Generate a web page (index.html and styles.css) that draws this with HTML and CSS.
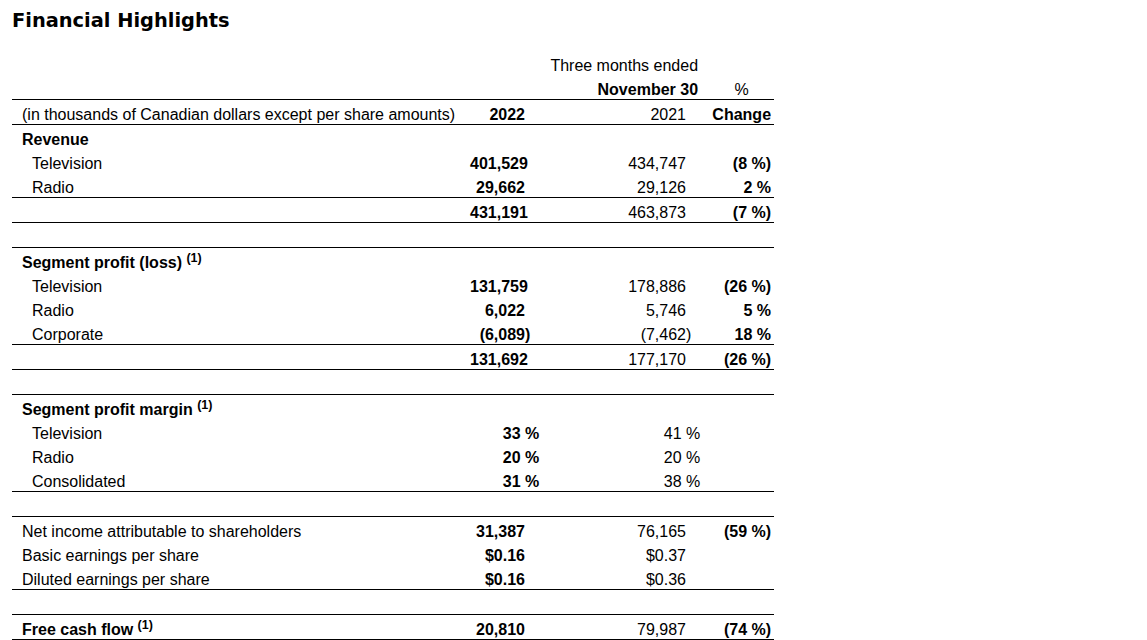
FILE: index.html
```html
<!DOCTYPE html>
<html>
<head>
<meta charset="utf-8">
<title>Financial Highlights</title>
<link rel="stylesheet" href="styles.css">
</head>
<body>
<div class="page">
  <h1 class="title">Financial Highlights</h1>
  <table class="fin">
    <colgroup>
      <col class="c-label">
      <col class="c-n22">
      <col class="c-s22">
      <col class="c-n21">
      <col class="c-s21">
      <col class="c-chg">
    </colgroup>
    <tr>
      <td></td>
      <td colspan="4" class="span-head">Three months ended</td>
      <td></td>
    </tr>
    <tr>
      <td></td>
      <td colspan="4" class="span-head b">November 30</td>
      <td class="chg center">%</td>
    </tr>
    <tr class="rule">
      <td class="lbl">(in thousands of Canadian dollars except per share amounts)</td>
      <td class="num b">2022</td><td></td>
      <td class="num">2021</td><td></td>
      <td class="chg b">Change</td>
    </tr>

    <tr class="rule"><td class="lbl b">Revenue</td><td></td><td></td><td></td><td></td><td></td></tr>
    <tr><td class="lbl sub">Television</td><td class="num b">401,529</td><td></td><td class="num">434,747</td><td></td><td class="chg b">(8 %)</td></tr>
    <tr><td class="lbl sub">Radio</td><td class="num b">29,662</td><td></td><td class="num">29,126</td><td></td><td class="chg b">2 %</td></tr>
    <tr class="rule"><td class="lbl">&nbsp;</td><td class="num b">431,191</td><td></td><td class="num">463,873</td><td></td><td class="chg b">(7 %)</td></tr>
    <tr class="rule"><td class="lbl">&nbsp;</td><td></td><td></td><td></td><td></td><td></td></tr>

    <tr class="rule"><td class="lbl b">Segment profit (loss) <sup class="note">(1)</sup></td><td></td><td></td><td></td><td></td><td></td></tr>
    <tr><td class="lbl sub">Television</td><td class="num b">131,759</td><td></td><td class="num">178,886</td><td></td><td class="chg b">(26 %)</td></tr>
    <tr><td class="lbl sub">Radio</td><td class="num b">6,022</td><td></td><td class="num">5,746</td><td></td><td class="chg b">5 %</td></tr>
    <tr><td class="lbl sub">Corporate</td><td class="num b">(6,089</td><td class="suf b">)</td><td class="num">(7,462</td><td class="suf">)</td><td class="chg b">18 %</td></tr>
    <tr class="rule"><td class="lbl">&nbsp;</td><td class="num b">131,692</td><td></td><td class="num">177,170</td><td></td><td class="chg b">(26 %)</td></tr>
    <tr class="rule"><td class="lbl">&nbsp;</td><td></td><td></td><td></td><td></td><td></td></tr>

    <tr class="rule"><td class="lbl b">Segment profit margin <sup class="note">(1)</sup></td><td></td><td></td><td></td><td></td><td></td></tr>
    <tr><td class="lbl sub">Television</td><td class="num b">33&nbsp;</td><td class="suf b">%</td><td class="num">41&nbsp;</td><td class="suf">%</td><td></td></tr>
    <tr><td class="lbl sub">Radio</td><td class="num b">20&nbsp;</td><td class="suf b">%</td><td class="num">20&nbsp;</td><td class="suf">%</td><td></td></tr>
    <tr><td class="lbl sub">Consolidated</td><td class="num b">31&nbsp;</td><td class="suf b">%</td><td class="num">38&nbsp;</td><td class="suf">%</td><td></td></tr>
    <tr class="rule"><td class="lbl">&nbsp;</td><td></td><td></td><td></td><td></td><td></td></tr>

    <tr class="rule"><td class="lbl">Net income attributable to shareholders</td><td class="num b">31,387</td><td></td><td class="num">76,165</td><td></td><td class="chg b">(59 %)</td></tr>
    <tr><td class="lbl">Basic earnings per share</td><td class="num b">$0.16</td><td></td><td class="num">$0.37</td><td></td><td></td></tr>
    <tr><td class="lbl">Diluted earnings per share</td><td class="num b">$0.16</td><td></td><td class="num">$0.36</td><td></td><td></td></tr>
    <tr class="rule"><td class="lbl">&nbsp;</td><td></td><td></td><td></td><td></td><td></td></tr>

    <tr class="rule last"><td class="lbl b">Free cash flow <sup class="note">(1)</sup></td><td class="num b">20,810</td><td></td><td class="num">79,987</td><td></td><td class="chg b">(74 %)</td></tr>
  </table>
</div>
</body>
</html>
```

FILE: styles.css
```css
html, body {
  margin: 0;
  padding: 0;
  background: #ffffff;
  color: #000000;
}

.page {
  padding: 0 0 0 12px;
}

.title {
  margin: 0;
  padding-top: 10px;
  font-family: "DejaVu Sans", Verdana, sans-serif;
  font-weight: bold;
  font-size: 19.4px;
  line-height: 22px;
}

.fin {
  margin-top: 19px;
  table-layout: fixed;
  width: 762px;
  border-collapse: separate;
  border-spacing: 0;
  font-family: "Liberation Sans", Arial, sans-serif;
  font-size: 16px;
  color: #000000;
}

.c-label { width: 458px; }
.c-n22 { width: 55px; }
.c-s22 { width: 20px; }
.c-n21 { width: 141px; }
.c-s21 { width: 26px; }
.c-chg { width: 62px; }

.fin td {
  padding: 5.6px 0 0 0;
  line-height: 18.4px;
  vertical-align: bottom;
  white-space: nowrap;
}

.fin tr.rule td {
  border-top: 1px solid #000000;
}

.fin tr.last td {
  border-bottom: 1px solid #000000;
}

.b { font-weight: bold; }

.fin td.lbl { padding-left: 10px; }
.fin td.lbl.sub { padding-left: 20px; }

.fin td.num { text-align: right; }
.fin td.suf { text-align: left; }

.fin td.chg {
  text-align: right;
  padding-right: 3px;
}

.fin td.chg.center { text-align: center; }

.fin td.span-head {
  text-align: right;
  padding-right: 14px;
}

.note {
  font-size: 12.5px;
  line-height: 0;
  vertical-align: 6px;
}
```
